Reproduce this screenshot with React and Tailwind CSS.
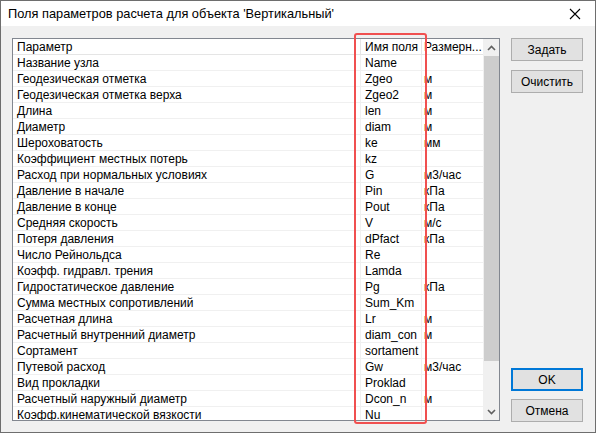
import React from "react";

const rows = [
  ["Название узла", "Name", ""],
  ["Геодезическая отметка", "Zgeo", "м"],
  ["Геодезическая отметка верха", "Zgeo2", "м"],
  ["Длина", "len", "м"],
  ["Диаметр", "diam", "м"],
  ["Шероховатость", "ke", "мм"],
  ["Коэффициент местных потерь", "kz", ""],
  ["Расход при нормальных условиях", "G", "м3/час"],
  ["Давление в начале", "Pin", "кПа"],
  ["Давление в конце", "Pout", "кПа"],
  ["Средняя скорость", "V", "м/с"],
  ["Потеря давления", "dPfact", "кПа"],
  ["Число Рейнольдса", "Re", ""],
  ["Коэфф. гидравл. трения", "Lamda", ""],
  ["Гидростатическое давление", "Pg", "кПа"],
  ["Сумма местных сопротивлений", "Sum_Km", ""],
  ["Расчетная длина", "Lr", "м"],
  ["Расчетный внутренний диаметр", "diam_con", "м"],
  ["Сортамент", "sortament", ""],
  ["Путевой расход", "Gw", "м3/час"],
  ["Вид прокладки", "Proklad", ""],
  ["Расчетный наружный диаметр", "Dcon_n", "м"],
  ["Коэфф.кинематической вязкости", "Nu", ""],
];

function Btn({ children, primary }) {
  return (
    <button
      className={`w-[72px] h-[23px] bg-[#e1e1e1] text-[12px] text-black flex items-center justify-center ${
        primary ? "border-2 border-[#0078d7]" : "border border-[#adadad]"
      }`}
    >
      {children}
    </button>
  );
}

export default function App() {
  return (
    <div
      className="w-[596px] h-[433px] flex flex-col border border-[#6e6e6e] bg-[#f0f0f0] overflow-hidden"
      style={{ fontFamily: '"Liberation Sans", Arial, sans-serif' }}
    >
      <div className="h-[25px] bg-white flex items-center justify-between pl-[7px] pr-[14px] pt-[1px] shrink-0">
        <span className="text-[12.8px] text-black">Поля параметров расчета для объекта 'Вертикальный'</span>
        <svg width="12" height="12" viewBox="0 0 12 12">
          <path d="M1 1 L11 11 M11 1 L1 11" stroke="#000" strokeWidth="1.1" />
        </svg>
      </div>

      <div className="flex pl-[11px] pt-[12px] gap-[11px]">
        <div className="relative">
          <div className="w-[488px] h-[383px] border border-[#828790] bg-white flex overflow-hidden">
            <div className="w-[470px] flex flex-col text-[12px] leading-[16px] text-black">
              <div className="grid grid-cols-[348px_61px_61px] h-[16px] border-b border-[#e5e5e5] shrink-0">
                <div className="pl-[4px] border-r border-[#e5e5e5]">Параметр</div>
                <div className="pl-[4px] border-r border-[#e5e5e5]">Имя поля</div>
                <div className="pl-[2px] whitespace-nowrap overflow-hidden">Размерн...</div>
              </div>
              {rows.map((r, i) => (
                <div key={i} className="grid grid-cols-[348px_61px_61px] h-[16px] shrink-0 border-b border-[#f0f0f0]">
                  <div className="pl-[4px] border-r border-[#f0f0f0] whitespace-nowrap">{r[0]}</div>
                  <div className="pl-[4px] border-r border-[#f0f0f0] whitespace-nowrap">{r[1]}</div>
                  <div className="pl-[2px] whitespace-nowrap">{r[2]}</div>
                </div>
              ))}
            </div>
            <div className="w-[16px] bg-[#f0f0f0] flex flex-col items-center">
              <div className="h-[17px] flex items-center justify-center">
                <svg width="9" height="6" viewBox="0 0 9 6">
                  <path d="M1 5 L4.5 1.5 L8 5" fill="none" stroke="#606060" strokeWidth="1.6" />
                </svg>
              </div>
              <div className="w-[15px] h-[305px] bg-[#cdcdcd]" />
              <div className="flex-1" />
              <div className="h-[17px] flex items-center justify-center">
                <svg width="9" height="6" viewBox="0 0 9 6">
                  <path d="M1 1 L4.5 4.5 L8 1" fill="none" stroke="#606060" strokeWidth="1.6" />
                </svg>
              </div>
            </div>
          </div>
          <div className="absolute left-[342px] top-[-5px] w-[73px] h-[391px] border-2 border-[#f05050] rounded-[3px] pointer-events-none" />
        </div>

        <div className="flex flex-col h-[385px]">
          <div className="flex flex-col gap-[9px]">
            <Btn>Задать</Btn>
            <Btn>Очистить</Btn>
          </div>
          <div className="flex-1" />
          <div className="flex flex-col gap-[8px] mb-[1px]">
            <Btn primary>OK</Btn>
            <Btn>Отмена</Btn>
          </div>
        </div>
      </div>
    </div>
  );
}
